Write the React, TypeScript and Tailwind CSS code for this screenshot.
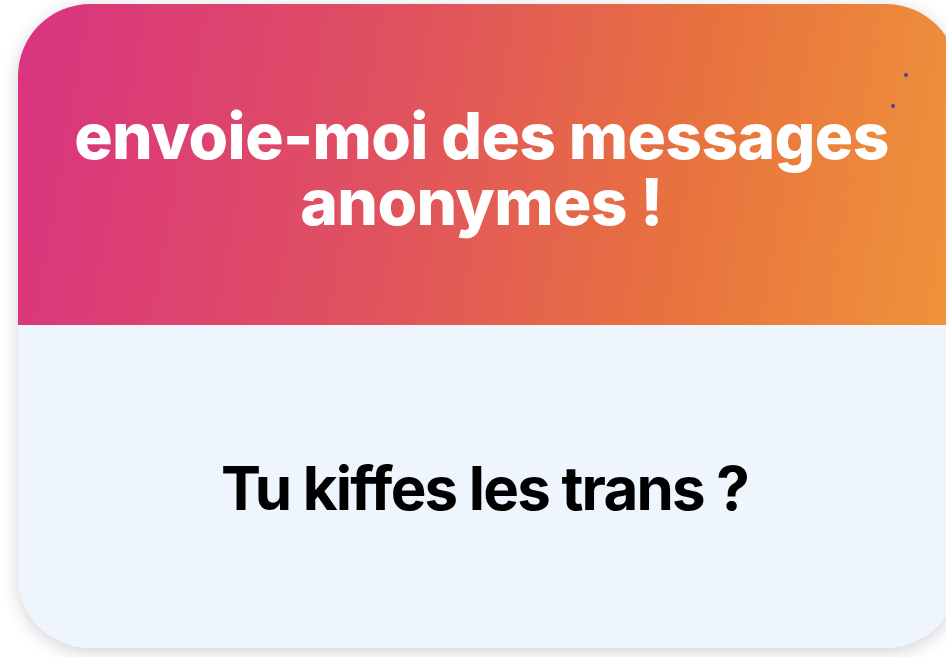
export default function App() {
  return (
    <div className="w-[946px] h-[657px] bg-white overflow-hidden relative" style={{ fontFamily: "Inter, 'Noto Sans', sans-serif" }}>
      <div className="absolute left-[18px] top-[4px] w-[940px] h-[644px] rounded-[72px] overflow-hidden flex flex-col shadow-[0_4px_18px_rgba(0,0,0,0.18)]">
        <div className="h-[321px] bg-[linear-gradient(100deg,#d93381_0%,#e0525e_40%,#e8723f_70%,#ef943a_100%)] flex flex-col items-center justify-center pt-[8px] relative">
          <p className="text-white font-extrabold text-[64px] leading-[66px] tracking-[-0.6px] text-center -ml-[13px]">
            envoie-moi des messages
            <br />
            anonymes !
          </p>
          <div className="absolute left-[886px] top-[69px] w-[4px] h-[4px] rounded-full bg-[#4b3fa3]" />
          <div className="absolute left-[873px] top-[100px] w-[4px] h-[4px] rounded-full bg-[#4b3fa3]" />
        </div>
        <div className="flex-1 bg-[#eef5fd] flex items-center justify-center">
          <div className="text-black font-bold text-[60px] tracking-[-1.8px] -ml-[7px] pt-[2px]">Tu kiffes les trans ?</div>
        </div>
      </div>
    </div>
  );
}
